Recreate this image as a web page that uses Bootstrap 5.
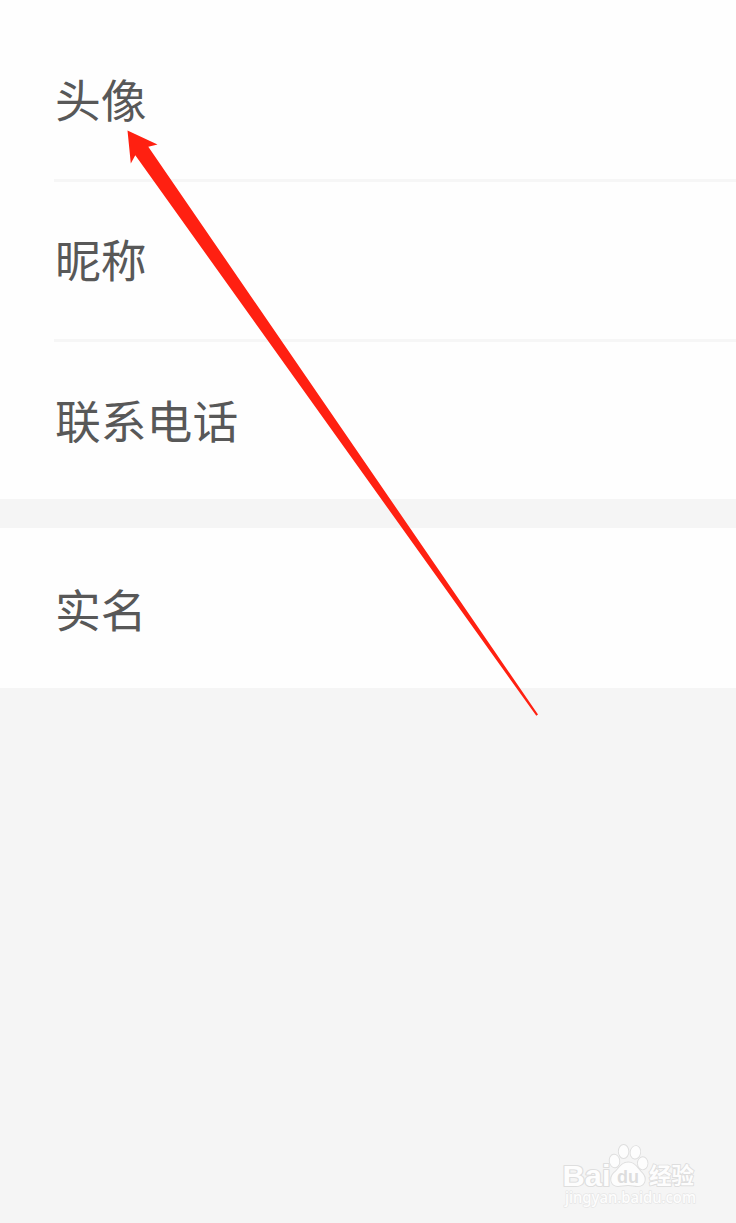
<!DOCTYPE html>
<html lang="zh-CN">
<head>
<meta charset="utf-8">
<meta name="viewport" content="width=device-width, initial-scale=1">
<title>个人资料</title>
<link href="https://cdn.jsdelivr.net/npm/bootstrap@5.3.0/dist/css/bootstrap.min.css" rel="stylesheet">
<style>
  body { background: #f5f5f5; font-family: "Noto Sans CJK SC", sans-serif; }
  .screen { height: 1223px; }
  .profile-group { background: #fefefe; }
  .profile-first { padding-top: 22px; }
  .profile-row { height: 160px; margin-left: 54px; padding: 0 0 3px 1px; font-size: 45.8px; line-height: 68px; color: #585858; }
  .profile-row.divided { border-bottom: 3px solid #f6f6f6; padding-bottom: 6px; }
  .profile-first .profile-row:last-child { height: 157px; }
  .profile-second { margin-top: 29px; }
  .profile-second .profile-row { padding-bottom: 1px; }
  .watermark { right: 16px; bottom: 3px; }
</style>
</head>
<body>
<main class="screen position-relative overflow-hidden">
  <section class="profile-group profile-first">
    <div class="profile-row divided d-flex align-items-center">头像</div>
    <div class="profile-row divided d-flex align-items-center">昵称</div>
    <div class="profile-row d-flex align-items-center">联系电话</div>
  </section>
  <section class="profile-group profile-second">
    <div class="profile-row d-flex align-items-center">实名</div>
  </section>

  <!-- pointer to the avatar row -->
  <svg class="position-absolute top-0 start-0" width="736" height="1223" viewBox="0 0 736 1223" aria-hidden="true">
    <path fill="#ff2011" d="M127.5 130.5 157.5 144.5 148.3 146.8 538 714.5 536.3 715.8 135.3 155.3 130.8 163.5Z"/>
  </svg>

  <svg class="watermark position-absolute" width="170" height="90" viewBox="550 1130 170 90">
    <g fill="#fdfdfd" stroke="#dedede" stroke-width="1.8" paint-order="stroke" stroke-linejoin="round">
      <ellipse cx="614.5" cy="1161" rx="4.8" ry="6.3" transform="rotate(-8 614.5 1161)"/>
      <ellipse cx="623.6" cy="1151.5" rx="4.8" ry="6.5"/>
      <ellipse cx="635.4" cy="1152.3" rx="4.8" ry="6.3" transform="rotate(10 635.4 1152.3)"/>
      <ellipse cx="642.7" cy="1163.3" rx="4.8" ry="6.1"/>
      <path d="M628.5 1162.5C635 1162.5 638 1169 642 1173C647 1178 645 1186 638 1186C634 1186 632 1185 628 1185C624 1185 621 1186 618 1186C611 1186 609 1178 614 1173C619 1169 621 1162.5 628.5 1162.5Z"/>
      <text x="562.5" y="1185.5" font-family="Liberation Sans" font-weight="700" font-size="29" stroke-width="2.2" textLength="48" lengthAdjust="spacingAndGlyphs">Bai</text>
      <text x="649" y="1183.5" font-family="Noto Sans CJK SC" font-weight="700" font-size="22.5" textLength="45" lengthAdjust="spacingAndGlyphs">经验</text>
      <text x="565" y="1203" font-family="Noto Sans" font-weight="500" font-size="15.5" stroke="#e6e6e6" stroke-width="1.4" textLength="131" lengthAdjust="spacingAndGlyphs">jingyan.baidu.com</text>
    </g>
    <text x="617" y="1182.5" fill="#dddddd" font-family="Liberation Sans" font-weight="700" font-size="19" textLength="22" lengthAdjust="spacingAndGlyphs">du</text>
  </svg>
</main>
<script src="https://cdn.jsdelivr.net/npm/bootstrap@5.3.0/dist/js/bootstrap.bundle.min.js"></script>
</body>
</html>
